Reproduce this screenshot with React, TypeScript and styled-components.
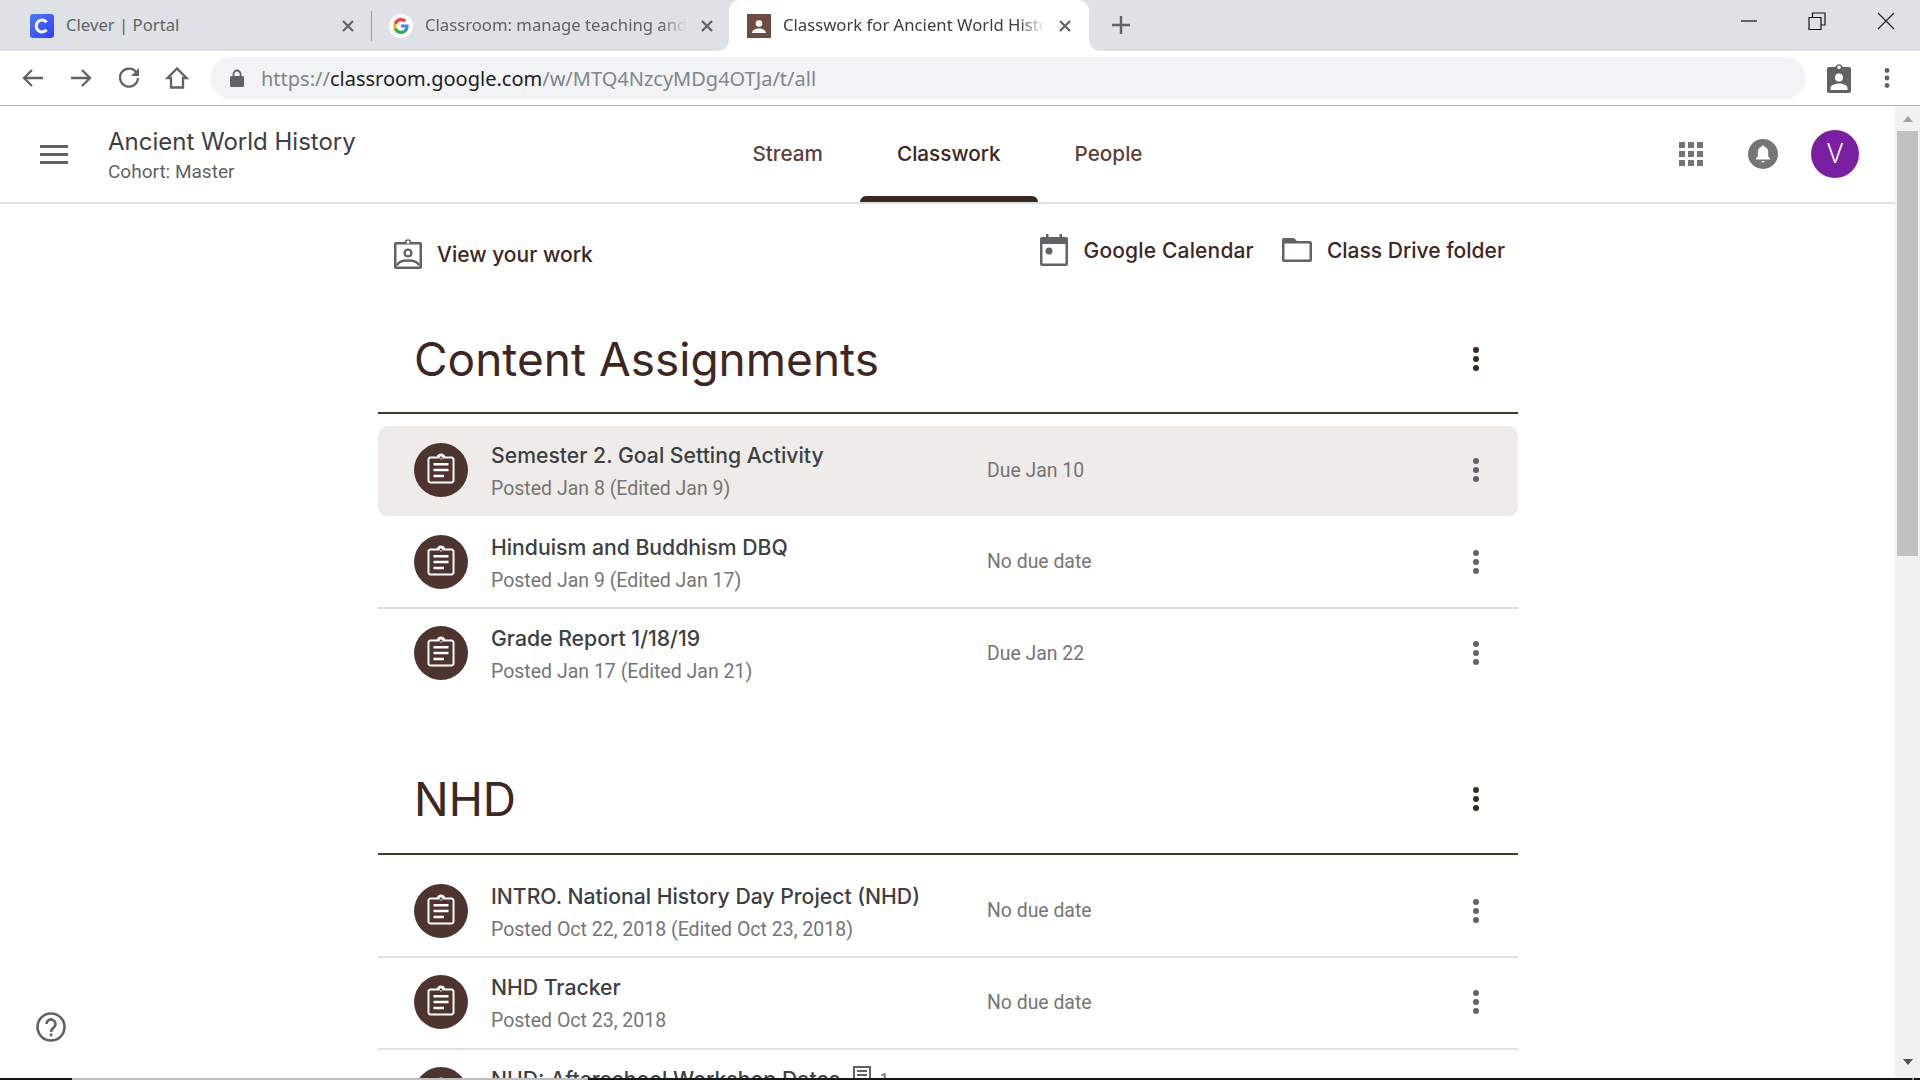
import React from "react";
import styled, { createGlobalStyle } from "styled-components";

const GlobalStyle = createGlobalStyle`
  html, body {
    margin: 0;
    padding: 0;
    background: #fff;
    overflow: hidden;
  }
  * {
    box-sizing: border-box;
  }
`;

const chromeFont = `"Noto Sans", "Open Sans", sans-serif`;
const headFont = `"Inter", "Roboto", sans-serif`;
const bodyFont = `"Roboto", sans-serif`;
const brown = "#4e342e";
const grey = "#5f6368";

const Page = styled.div`
  position: relative;
  width: 1920px;
  height: 1080px;
  overflow: hidden;
  display: flex;
  flex-direction: column;
`;

const TabStrip = styled.div`
  height: 51px;
  flex: none;
  background: #dee1e6;
  display: flex;
  align-items: center;
  font-family: ${chromeFont};
`;

const Tab = styled.div<{ $active?: boolean; $width: number; $left: number }>`
  position: relative;
  width: ${(p) => p.$width}px;
  height: 51px;
  flex: none;
  display: flex;
  align-items: center;
  padding-left: ${(p) => p.$left}px;
  background: ${(p) => (p.$active ? "#fff" : "transparent")};
  border-radius: 11px 11px 0 0;
  color: ${(p) => (p.$active ? "#3c4043" : "#5f6368")};
`;

const TabFlare = styled.span<{ $side: "left" | "right" }>`
  position: absolute;
  bottom: 0;
  ${(p) => p.$side}: -11px;
  width: 11px;
  height: 11px;
  background: radial-gradient(
    circle at ${(p) => (p.$side === "left" ? "0 0" : "100% 0")},
    #dee1e6 10.5px,
    #fff 11px
  );
`;

const Favicon = styled.svg`
  width: 24px;
  height: 24px;
  flex: none;
`;

const TabTitle = styled.span<{ $width: number; $fade?: boolean }>`
  width: ${(p) => p.$width}px;
  margin: -2px 0 0 12px;
  font-size: 16.7px;
  white-space: nowrap;
  overflow: hidden;
  ${(p) =>
    p.$fade &&
    `-webkit-mask-image: linear-gradient(to right, #000 90%, transparent 100%);
     mask-image: linear-gradient(to right, #000 90%, transparent 100%);`}
`;

const TabClose = styled.svg<{ $gap: number }>`
  width: 14px;
  height: 14px;
  margin-left: ${(p) => p.$gap}px;
  flex: none;
`;

const TabDivider = styled.span`
  width: 1px;
  height: 30px;
  flex: none;
  background: #9aa0a6;
`;

const NewTab = styled.svg`
  width: 18px;
  height: 18px;
  margin: -1px 0 0 23px;
`;

const WindowControls = styled.div`
  margin-left: auto;
  display: flex;
  align-self: flex-start;
  padding: 12px 25px 0 0;
  gap: 51px;
`;

const Toolbar = styled.div`
  height: 55px;
  flex: none;
  background: #fff;
  border-bottom: 1px solid #b3b3b3;
  display: flex;
  align-items: flex-start;
  padding: 6px 0 0 19.5px;
`;

const NavGroup = styled.div`
  display: flex;
  gap: 22px;
  margin: 8px 20.5px 0 0;
  flex: none;
`;

const NavButton = styled.svg`
  width: 26px;
  height: 26px;
  flex: none;
`;

const Omnibox = styled.div`
  width: 1596px;
  height: 42px;
  border-radius: 21px;
  background: #f1f3f4;
  display: flex;
  align-items: center;
  padding-left: 20px;
  flex: none;
  font-family: ${chromeFont};
  font-size: 20px;
  color: #80868b;
`;

const LockIcon = styled.svg`
  width: 14px;
  height: 18px;
  margin-right: 17px;
  flex: none;
`;

const UrlHost = styled.span`
  color: #202124;
`;

const BadgeIcon = styled.svg`
  width: 24px;
  height: 30px;
  margin: 6px 0 0 21px;
  flex: none;
`;

const ChromeMenu = styled.svg`
  width: 6px;
  height: 20px;
  margin: 11px 0 0 33px;
  flex: none;
`;

const Main = styled.div`
  flex: 1;
  min-height: 0;
  display: flex;
`;

const Content = styled.div`
  flex: 1;
  min-width: 0;
`;

const Scrollbar = styled.div`
  width: 25px;
  flex: none;
  background: #f1f1f1;
  display: flex;
  flex-direction: column;
  align-items: center;
`;

const ScrollButton = styled.div<{ $down?: boolean }>`
  height: 25px;
  flex: none;
  display: flex;
  align-items: center;
  justify-content: center;
  margin-top: ${(p) => (p.$down ? "auto" : "0")};
  margin-bottom: ${(p) => (p.$down ? "6px" : "0")};
  &::after {
    content: "";
    border-left: 5.5px solid transparent;
    border-right: 5.5px solid transparent;
    ${(p) =>
      p.$down
        ? "border-top: 6px solid #505050;"
        : "border-bottom: 6px solid #a3a3a3;"}
  }
`;

const ScrollThumb = styled.div`
  width: 21px;
  height: 425px;
  flex: none;
  background: #c1c1c1;
`;

const AppBar = styled.header`
  height: 98px;
  border-bottom: 2px solid #e0e0e0;
  display: grid;
  grid-template-columns: 1fr auto 1fr;
  align-items: stretch;
`;

const AppBarLeft = styled.div`
  display: flex;
  align-items: center;
  padding-left: 40px;
  gap: 40px;
`;

const Hamburger = styled.div`
  width: 28px;
  display: flex;
  flex-direction: column;
  gap: 5px;
  span {
    height: 3px;
    background: ${grey};
  }
`;

const ClassTitle = styled.div`
  font-family: ${headFont};
  font-size: 24px;
  color: #3c4043;
  line-height: 30px;
  margin-top: 3px;
`;

const ClassSub = styled.div`
  font-family: ${bodyFont};
  font-size: 19px;
  color: ${grey};
  line-height: 24px;
  margin-top: 3px;
`;

const ClassTabs = styled.nav`
  display: flex;
`;

const ClassTab = styled.div<{ $active?: boolean }>`
  position: relative;
  display: flex;
  align-items: center;
  padding: 0 37px 1px;
  font-family: ${headFont};
  font-size: 20.7px;
  font-weight: 500;
  color: ${(p) => (p.$active ? "#3e2723" : "#5d4037")};
  ${(p) =>
    p.$active &&
    `&::after {
      content: "";
      position: absolute;
      left: 0;
      right: 0;
      bottom: 0;
      height: 6px;
      border-radius: 6px 6px 0 0;
      background: #3e2723;
    }`}
`;

const AppBarRight = styled.div`
  display: flex;
  align-items: center;
  justify-content: flex-end;
  padding-right: 24px;
`;

const IconSlot = styled.div`
  width: 72px;
  display: flex;
  justify-content: center;
`;

const AppsGrid = styled.div`
  display: grid;
  grid-template-columns: repeat(3, 6px);
  gap: 3px;
  span {
    height: 6px;
    background: #757575;
  }
`;

const Avatar = styled.div`
  width: 48px;
  height: 48px;
  border-radius: 50%;
  background: #7b1fa2;
  color: #fff;
  font-family: ${bodyFont};
  font-size: 27px;
  font-weight: 300;
  display: flex;
  align-items: center;
  justify-content: center;
`;

const Column = styled.main`
  width: 1140px;
  margin-left: 378px;
`;

const ActionBar = styled.div`
  height: 101px;
  display: flex;
  justify-content: space-between;
  align-items: flex-start;
  padding: 30px 13px 0 16px;
`;

const ActionLink = styled.div<{ $drop?: number; $spacing?: number }>`
  display: flex;
  align-items: center;
  margin-top: ${(p) => p.$drop || 0}px;
  font-family: ${headFont};
  font-size: 21px;
  font-weight: 500;
  letter-spacing: ${(p) => p.$spacing || 0}px;
  color: #3e2723;
  white-space: nowrap;
`;

const ActionGroup = styled.div`
  display: flex;
  gap: 28px;
`;

const ActionIcon = styled.svg<{ $gap: number }>`
  margin-right: ${(p) => p.$gap}px;
  flex: none;
`;

const Section = styled.section`
  & + & {
    margin-top: 45px;
  }
`;

const SectionHead = styled.div`
  height: 109px;
  border-bottom: 2px solid ${brown};
  display: flex;
  align-items: center;
  justify-content: space-between;
  padding: 0 39px 0 36px;
`;

const SectionTitle = styled.h2`
  margin: 0;
  font-family: ${headFont};
  font-size: 46px;
  font-weight: 400;
  color: #3e2723;
`;

const DotsWrap = styled.div<{ $color: string }>`
  width: 6px;
  display: flex;
  flex-direction: column;
  gap: 3px;
  flex: none;
  span {
    width: 6px;
    height: 6px;
    border-radius: 50%;
    background: ${(p) => p.$color};
  }
`;

const RowList = styled.div`
  padding-top: 12px;
`;

const Row = styled.div<{ $selected?: boolean; $last?: boolean }>`
  height: 91.5px;
  display: flex;
  align-items: center;
  padding: 0 39px 1px 36px;
  background: ${(p) => (p.$selected ? "#efebe9" : "transparent")};
  background-clip: padding-box;
  border-radius: ${(p) => (p.$selected ? "10px" : "0")};
  border-bottom: 2px solid
    ${(p) => (p.$selected || p.$last ? "transparent" : "#e0e0e0")};
`;

const RowBadge = styled.div`
  width: 54px;
  height: 54px;
  border-radius: 50%;
  background: ${brown};
  display: flex;
  align-items: center;
  justify-content: center;
  flex: none;
`;

const RowMain = styled.div`
  width: 496px;
  margin-left: 23px;
  padding-top: 2px;
  flex: none;
`;

const RowTitle = styled.div`
  display: flex;
  align-items: center;
  font-family: ${headFont};
  font-size: 21.2px;
  font-weight: 500;
  line-height: 28px;
  color: #3c4043;
  white-space: nowrap;
`;

const RowPosted = styled.div`
  font-family: ${bodyFont};
  font-size: 19.5px;
  line-height: 24px;
  margin-top: 8px;
  color: #757575;
  white-space: nowrap;
`;

const RowDue = styled.div`
  flex: 1;
  font-family: ${bodyFont};
  font-size: 19.4px;
  color: #757575;
`;

const AttachIcon = styled.svg`
  width: 20px;
  height: 20px;
  margin: -8px 0 0 12px;
  flex: none;
`;

const AttachCount = styled.span`
  font-family: ${bodyFont};
  font-size: 14px;
  color: #757575;
  margin-left: 8px;
`;

const HelpButton = styled.svg`
  position: absolute;
  left: 36px;
  bottom: 38px;
  width: 30px;
  height: 30px;
`;

const ShelfEdge = styled.div`
  position: absolute;
  left: 0;
  right: 0;
  bottom: 0;
  height: 2px;
  background: linear-gradient(
    to right,
    #161616 72px,
    #bdbdbd 72px,
    #bdbdbd 588px,
    #161616 588px,
    #161616 1912px,
    #888 1912px,
    #888 1914px,
    #161616 1914px
  );
`;

const CloseGlyph = ({ gap }: { gap: number }) => (
  <TabClose $gap={gap} viewBox="0 0 14 14">
    <path d="M2 2l10 10M12 2L2 12" stroke="#5f6368" strokeWidth="2.2" />
  </TabClose>
);

const CleverIcon = () => (
  <Favicon viewBox="0 0 24 24">
    <defs>
      <linearGradient id="cleverBg" x1="0" y1="0" x2="1" y2="1">
        <stop offset="0" stopColor="#4b7bf5" />
        <stop offset="1" stopColor="#3a3cf5" />
      </linearGradient>
    </defs>
    <rect width="24" height="24" rx="3" fill="url(#cleverBg)" />
    <path
      d="M16.6 8.2A5.9 5.9 0 1 0 16.6 15.8"
      fill="none"
      stroke="#fff"
      strokeWidth="3"
    />
  </Favicon>
);

const GoogleIcon = () => (
  <Favicon viewBox="0 0 24 24">
    <circle cx="12" cy="12" r="12" fill="#fff" />
    <path
      d="M19.6 12.2c0-.6-.1-1.1-.2-1.6H12v3h4.3c-.2 1-.7 1.8-1.6 2.4v2h2.5c1.5-1.4 2.4-3.4 2.4-5.8z"
      fill="#4285f4"
    />
    <path
      d="M12 20c2.2 0 4-.7 5.3-2l-2.5-2c-.7.5-1.6.8-2.7.8-2.1 0-3.9-1.4-4.6-3.3H4.9v2C6.2 18.2 8.9 20 12 20z"
      fill="#34a853"
    />
    <path d="M7.4 13.5c-.4-1-.4-2.1 0-3v-2H4.9a8 8 0 0 0 0 7z" fill="#fbbc05" />
    <path
      d="M12 7.2c1.2 0 2.3.4 3.1 1.2l2.3-2.3C16 4.8 14.2 4 12 4 8.9 4 6.2 5.8 4.9 8.5l2.5 2c.7-1.9 2.5-3.3 4.6-3.3z"
      fill="#ea4335"
    />
  </Favicon>
);

const ClassroomIcon = () => (
  <Favicon viewBox="0 0 24 24">
    <rect width="24" height="24" fill="#6d4c41" />
    <circle cx="12" cy="9.5" r="3.3" fill="#fff" />
    <path d="M5 19c0-3 3.5-4.5 7-4.5s7 1.5 7 4.5z" fill="#fff" />
  </Favicon>
);

const WindowIcons = () => (
  <WindowControls>
    <svg width="16" height="18" viewBox="0 0 16 18">
      <path d="M0 9h16" stroke="#111" strokeWidth="1.2" />
    </svg>
    <svg width="18" height="18" viewBox="0 0 18 18">
      <path
        d="M1 5.5h12v12H1zM4.5 5.5V1h12.5v12h-4"
        fill="none"
        stroke="#111"
        strokeWidth="1.2"
      />
    </svg>
    <svg width="18" height="18" viewBox="0 0 18 18">
      <path d="M1 1l16 16M17 1L1 17" stroke="#222" strokeWidth="1.1" />
    </svg>
  </WindowControls>
);

const AssignmentGlyph = ({ size = 36 }: { size?: number }) => (
  <svg width={size} height={size} viewBox="0 0 24 24">
    <path
      fillRule="evenodd"
      fill="#fff"
      d="M19 3h-4.18C14.4 1.84 13.3 1 12 1s-2.4.84-2.82 2H5c-1.1 0-2 .9-2 2v14c0 1.1.9 2 2 2h14c1.1 0 2-.9 2-2V5c0-1.1-.9-2-2-2zm-7 0c.55 0 1 .45 1 1s-.45 1-1 1-1-.45-1-1 .45-1 1-1zm7.7 16c0 .4-.3.7-.7.7H5c-.4 0-.7-.3-.7-.7V5c0-.4.3-.7.7-.7h14c.4 0 .7.3.7.7z"
    />
    <path fill="#fff" d="M7 7.3h10V9H7zM7 11.2h10v1.7H7zM7 15.1h7v1.7H7z" />
  </svg>
);

const Dots = ({ color }: { color: string }) => (
  <DotsWrap $color={color}>
    <span />
    <span />
    <span />
  </DotsWrap>
);

type Assignment = {
  title: string;
  posted: string;
  due: string;
  selected?: boolean;
  attachments?: number;
};

const contentRows: Assignment[] = [
  {
    title: "Semester 2. Goal Setting Activity",
    posted: "Posted Jan 8 (Edited Jan 9)",
    due: "Due Jan 10",
    selected: true,
  },
  {
    title: "Hinduism and Buddhism DBQ",
    posted: "Posted Jan 9 (Edited Jan 17)",
    due: "No due date",
  },
  {
    title: "Grade Report 1/18/19",
    posted: "Posted Jan 17 (Edited Jan 21)",
    due: "Due Jan 22",
  },
];

const nhdRows: Assignment[] = [
  {
    title: "INTRO. National History Day Project (NHD)",
    posted: "Posted Oct 22, 2018 (Edited Oct 23, 2018)",
    due: "No due date",
  },
  {
    title: "NHD Tracker",
    posted: "Posted Oct 23, 2018",
    due: "No due date",
  },
  {
    title: "NHD: Afterschool Workshop Dates",
    posted: "Posted Oct 23, 2018",
    due: "No due date",
    attachments: 1,
  },
];

const AssignmentRow = ({
  item,
  last,
}: {
  item: Assignment;
  last: boolean;
}) => (
  <Row $selected={item.selected} $last={last}>
    <RowBadge>
      <AssignmentGlyph />
    </RowBadge>
    <RowMain>
      <RowTitle>
        {item.title}
        {item.attachments && (
          <>
            <AttachIcon viewBox="0 0 20 20">
              <path
                d="M2 2h16v16H2zM5 6h10M5 10h10M5 14h7"
                fill="none"
                stroke="#5f6368"
                strokeWidth="2"
              />
            </AttachIcon>
            <AttachCount>{item.attachments}</AttachCount>
          </>
        )}
      </RowTitle>
      <RowPosted>{item.posted}</RowPosted>
    </RowMain>
    <RowDue>{item.due}</RowDue>
    <Dots color={grey} />
  </Row>
);

const TopicSection = ({
  title,
  rows,
  lastBorderless,
}: {
  title: string;
  rows: Assignment[];
  lastBorderless?: boolean;
}) => (
  <Section>
    <SectionHead>
      <SectionTitle>{title}</SectionTitle>
      <Dots color="#3e2723" />
    </SectionHead>
    <RowList>
      {rows.map((item, i) => (
        <AssignmentRow
          key={item.title}
          item={item}
          last={!!lastBorderless && i === rows.length - 1}
        />
      ))}
    </RowList>
  </Section>
);

export default function App() {
  return (
    <Page>
      <GlobalStyle />
      <TabStrip>
        <Tab $width={371} $left={30}>
          <CleverIcon />
          <TabTitle $width={275}>Clever | Portal</TabTitle>
          <CloseGlyph gap={0} />
        </Tab>
        <TabDivider />
        <Tab $width={357} $left={17}>
          <GoogleIcon />
          <TabTitle $width={262} $fade>
            Classroom: manage teaching and learning
          </TabTitle>
          <CloseGlyph gap={13} />
        </Tab>
        <Tab $active $width={360} $left={18}>
          <TabFlare $side="left" />
          <ClassroomIcon />
          <TabTitle $width={262} $fade>
            Classwork for Ancient World History
          </TabTitle>
          <CloseGlyph gap={13} />
          <TabFlare $side="right" />
        </Tab>
        <NewTab viewBox="0 0 18 18">
          <path d="M9 0v18M0 9h18" stroke="#5f6368" strokeWidth="2.4" />
        </NewTab>
        <WindowIcons />
      </TabStrip>

      <Toolbar>
        <NavGroup>
          <NavButton viewBox="0 0 26 26">
            <path
              d="M23 13H4M12 5l-8 8 8 8"
              fill="none"
              stroke={grey}
              strokeWidth="2.3"
            />
          </NavButton>
          <NavButton viewBox="0 0 26 26">
            <path
              d="M3 13h19M14 5l8 8-8 8"
              fill="none"
              stroke={grey}
              strokeWidth="2.3"
            />
          </NavButton>
          <NavButton viewBox="0 0 26 26">
            <path
              d="M21 8.5A9 9 0 1 0 22 13"
              fill="none"
              stroke={grey}
              strokeWidth="2.3"
            />
            <path d="M23 3v8h-8z" fill={grey} />
          </NavButton>
          <NavButton viewBox="0 0 26 26">
            <path
              d="M13 3.5L3.5 13H7v9.5h12V13h3.5z"
              fill="none"
              stroke={grey}
              strokeWidth="2.3"
            />
          </NavButton>
        </NavGroup>
        <Omnibox>
          <LockIcon viewBox="0 0 14 18">
            <path
              d="M3.5 7V5a3.5 3.5 0 0 1 7 0v2"
              fill="none"
              stroke={grey}
              strokeWidth="1.8"
            />
            <rect y="7" width="14" height="11" rx="1.5" fill={grey} />
          </LockIcon>
          <span>
            https://<UrlHost>classroom.google.com</UrlHost>
            /w/MTQ4NzcyMDg4OTJa/t/all
          </span>
        </Omnibox>
        <BadgeIcon viewBox="0 0 24 30">
          <path
            fillRule="evenodd"
            fill={grey}
            d="M2 4h6.5a3.6 3.6 0 0 1 7 0H22c1.1 0 2 .9 2 2v22c0 1.1-.9 2-2 2H2c-1.1 0-2-.9-2-2V6c0-1.1.9-2 2-2zm10-1.5a1.8 1.8 0 1 0 0 3.6 1.8 1.8 0 0 0 0-3.6z"
          />
          <circle cx="12" cy="14.5" r="4" fill="#fff" />
          <path d="M3.5 27v-2c0-3 5-4.5 8.5-4.5s8.5 1.5 8.5 4.5v2z" fill="#fff" />
        </BadgeIcon>
        <ChromeMenu viewBox="0 0 6 20">
          <circle cx="3" cy="2.5" r="2.4" fill={grey} />
          <circle cx="3" cy="10" r="2.4" fill={grey} />
          <circle cx="3" cy="17.5" r="2.4" fill={grey} />
        </ChromeMenu>
      </Toolbar>

      <Main>
        <Content>
          <AppBar>
            <AppBarLeft>
              <Hamburger>
                <span />
                <span />
                <span />
              </Hamburger>
              <div>
                <ClassTitle>Ancient World History</ClassTitle>
                <ClassSub>Cohort: Master</ClassSub>
              </div>
            </AppBarLeft>
            <ClassTabs>
              <ClassTab>Stream</ClassTab>
              <ClassTab $active>Classwork</ClassTab>
              <ClassTab>People</ClassTab>
            </ClassTabs>
            <AppBarRight>
              <IconSlot>
                <AppsGrid>
                  {Array.from({ length: 9 }).map((_, i) => (
                    <span key={i} />
                  ))}
                </AppsGrid>
              </IconSlot>
              <IconSlot>
                <svg width="30" height="30" viewBox="0 0 30 30">
                  <circle cx="15" cy="15" r="15" fill="#757575" />
                  <path
                    d="M15 6.5c.8 0 1.4.6 1.4 1.3 2.5.7 3.8 2.9 3.8 5.4v4.3l1.8 2v.9H8v-.9l1.8-2v-4.3c0-2.5 1.3-4.7 3.8-5.4 0-.7.6-1.3 1.4-1.3zM13.5 22h3a1.5 1.5 0 0 1-3 0z"
                    fill="#fff"
                  />
                </svg>
              </IconSlot>
              <IconSlot>
                <Avatar>V</Avatar>
              </IconSlot>
            </AppBarRight>
          </AppBar>

          <Column>
            <ActionBar>
              <ActionLink $drop={5}>
                <ActionIcon $gap={15} width="28" height="30" viewBox="0 0 28 30">
                  <path
                    fillRule="evenodd"
                    fill={grey}
                    d="M2 3h8.5a3.6 3.6 0 0 1 7 0H26c1.1 0 2 .9 2 2v23c0 1.1-.9 2-2 2H2c-1.1 0-2-.9-2-2V5c0-1.1.9-2 2-2zm.5 2.5v22h23v-22zM14 1.5a1.6 1.6 0 1 0 0 3.2 1.6 1.6 0 0 0 0-3.2z"
                  />
                  <circle cx="14" cy="14" r="3.4" fill="none" stroke={grey} strokeWidth="2.4" />
                  <path
                    d="M3 26.5c1-3.5 6-5 11-5s10 1.5 11 5"
                    fill="none"
                    stroke={grey}
                    strokeWidth="2.4"
                  />
                </ActionIcon>
                View your work
              </ActionLink>
              <ActionGroup>
                <ActionLink $spacing={0.16}>
                  <ActionIcon $gap={16} width="28" height="32" viewBox="0 0 28 32">
                    <path
                      fillRule="evenodd"
                      fill={grey}
                      d="M6 0h2.5v3h11V0H22v3h4c1.1 0 2 .9 2 2v25c0 1.1-.9 2-2 2H2c-1.1 0-2-.9-2-2V5c0-1.1.9-2 2-2h4zM2.5 10v19.5h23V10z"
                    />
                    <circle cx="9" cy="17" r="3.5" fill={grey} />
                  </ActionIcon>
                  Google Calendar
                </ActionLink>
                <ActionLink>
                  <ActionIcon $gap={15} width="30" height="24" viewBox="0 0 30 24">
                    <path
                      fillRule="evenodd"
                      fill={grey}
                      d="M2 0h10l3 3h13c1.1 0 2 .9 2 2v17c0 1.1-.9 2-2 2H2c-1.1 0-2-.9-2-2V2C0 .9.9 0 2 0zm.5 5.5v16h25v-16z"
                    />
                  </ActionIcon>
                  Class Drive folder
                </ActionLink>
              </ActionGroup>
            </ActionBar>

            <TopicSection
              title="Content Assignments"
              rows={contentRows}
              lastBorderless
            />
            <TopicSection title="NHD" rows={nhdRows} />
          </Column>
        </Content>
        <Scrollbar>
          <ScrollButton />
          <ScrollThumb />
          <ScrollButton $down />
        </Scrollbar>
      </Main>

      <HelpButton viewBox="0 0 30 30">
        <circle cx="15" cy="15" r="13.5" fill="none" stroke={grey} strokeWidth="2.6" />
        <path
          d="M10.5 12a4.5 4.5 0 1 1 7.5 3.3c-1.5 1.3-3 2-3 4.7"
          fill="none"
          stroke={grey}
          strokeWidth="2.6"
        />
        <rect x="13.7" y="21.5" width="2.6" height="2.8" fill={grey} />
      </HelpButton>
      <ShelfEdge />
    </Page>
  );
}
